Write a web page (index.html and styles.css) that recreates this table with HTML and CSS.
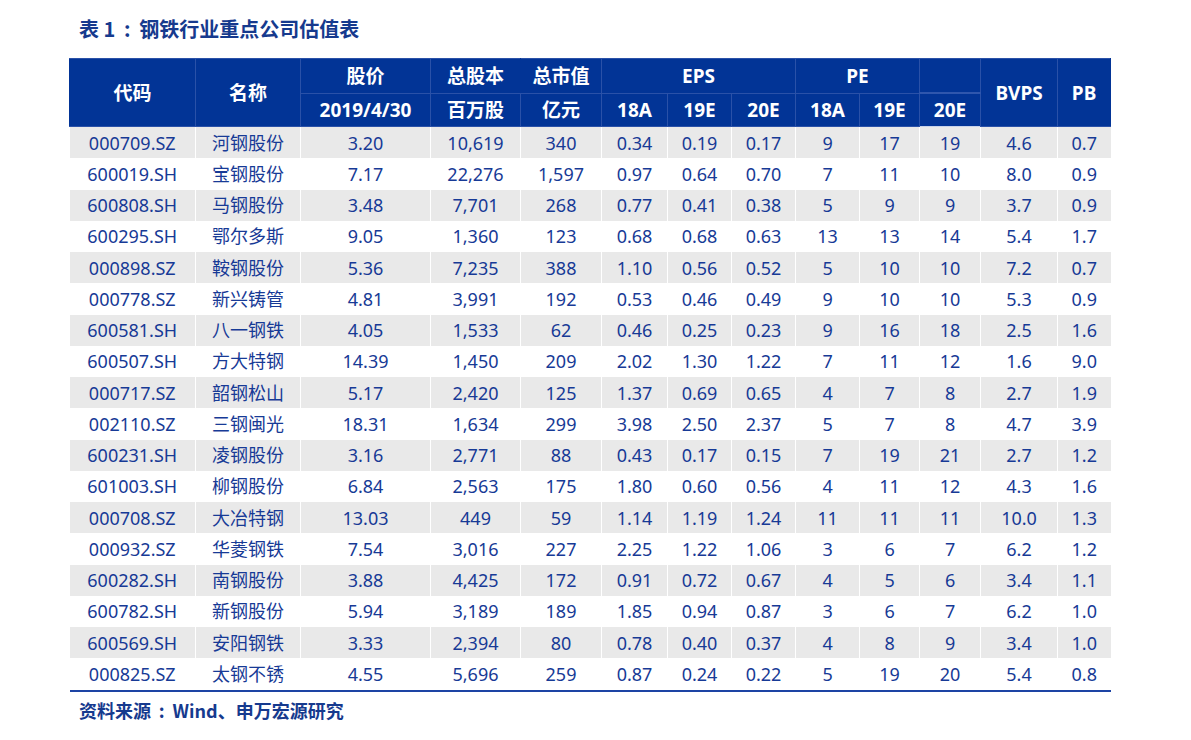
FILE: index.html
```html
<!DOCTYPE html>
<html lang="zh-CN">
<head>
<meta charset="utf-8">
<title>钢铁行业重点公司估值表</title>
<link rel="stylesheet" href="styles.css">
</head>
<body>
<div class="page">
  <h1 class="title">表 1<span class="punct">:</span>钢铁行业重点公司估值表</h1>
  <table class="val">
    <colgroup>
      <col class="c-code"><col class="c-name"><col class="c-price"><col class="c-shares"><col class="c-cap">
      <col class="c-e1"><col class="c-e2"><col class="c-e3"><col class="c-p1"><col class="c-p2"><col class="c-p3">
      <col class="c-bvps"><col class="c-pb">
    </colgroup>
    <thead>
      <tr class="h1">
        <th rowspan="2">代码</th>
        <th rowspan="2">名称</th>
        <th>股价</th>
        <th class="nosep">总股本</th>
        <th>总市值</th>
        <th colspan="3">EPS</th>
        <th colspan="2">PE</th>
        <th class="blank"></th>
        <th rowspan="2">BVPS</th>
        <th rowspan="2">PB</th>
      </tr>
      <tr class="h2">
        <th>2019/4/30</th>
        <th>百万股</th>
        <th>亿元</th>
        <th>18A</th>
        <th>19E</th>
        <th>20E</th>
        <th>18A</th>
        <th>19E</th>
        <th class="odd">20E</th>
      </tr>
    </thead>
    <tbody>
      <tr><td>000709.SZ</td><td>河钢股份</td><td>3.20</td><td>10,619</td><td>340</td><td>0.34</td><td>0.19</td><td>0.17</td><td>9</td><td>17</td><td>19</td><td>4.6</td><td>0.7</td></tr>
      <tr><td>600019.SH</td><td>宝钢股份</td><td>7.17</td><td>22,276</td><td>1,597</td><td>0.97</td><td>0.64</td><td>0.70</td><td>7</td><td>11</td><td>10</td><td>8.0</td><td>0.9</td></tr>
      <tr><td>600808.SH</td><td>马钢股份</td><td>3.48</td><td>7,701</td><td>268</td><td>0.77</td><td>0.41</td><td>0.38</td><td>5</td><td>9</td><td>9</td><td>3.7</td><td>0.9</td></tr>
      <tr><td>600295.SH</td><td>鄂尔多斯</td><td>9.05</td><td>1,360</td><td>123</td><td>0.68</td><td>0.68</td><td>0.63</td><td>13</td><td>13</td><td>14</td><td>5.4</td><td>1.7</td></tr>
      <tr><td>000898.SZ</td><td>鞍钢股份</td><td>5.36</td><td>7,235</td><td>388</td><td>1.10</td><td>0.56</td><td>0.52</td><td>5</td><td>10</td><td>10</td><td>7.2</td><td>0.7</td></tr>
      <tr><td>000778.SZ</td><td>新兴铸管</td><td>4.81</td><td>3,991</td><td>192</td><td>0.53</td><td>0.46</td><td>0.49</td><td>9</td><td>10</td><td>10</td><td>5.3</td><td>0.9</td></tr>
      <tr><td>600581.SH</td><td>八一钢铁</td><td>4.05</td><td>1,533</td><td>62</td><td>0.46</td><td>0.25</td><td>0.23</td><td>9</td><td>16</td><td>18</td><td>2.5</td><td>1.6</td></tr>
      <tr><td>600507.SH</td><td>方大特钢</td><td>14.39</td><td>1,450</td><td>209</td><td>2.02</td><td>1.30</td><td>1.22</td><td>7</td><td>11</td><td>12</td><td>1.6</td><td>9.0</td></tr>
      <tr><td>000717.SZ</td><td>韶钢松山</td><td>5.17</td><td>2,420</td><td>125</td><td>1.37</td><td>0.69</td><td>0.65</td><td>4</td><td>7</td><td>8</td><td>2.7</td><td>1.9</td></tr>
      <tr><td>002110.SZ</td><td>三钢闽光</td><td>18.31</td><td>1,634</td><td>299</td><td>3.98</td><td>2.50</td><td>2.37</td><td>5</td><td>7</td><td>8</td><td>4.7</td><td>3.9</td></tr>
      <tr><td>600231.SH</td><td>凌钢股份</td><td>3.16</td><td>2,771</td><td>88</td><td>0.43</td><td>0.17</td><td>0.15</td><td>7</td><td>19</td><td>21</td><td>2.7</td><td>1.2</td></tr>
      <tr><td>601003.SH</td><td>柳钢股份</td><td>6.84</td><td>2,563</td><td>175</td><td>1.80</td><td>0.60</td><td>0.56</td><td>4</td><td>11</td><td>12</td><td>4.3</td><td>1.6</td></tr>
      <tr><td>000708.SZ</td><td>大冶特钢</td><td>13.03</td><td>449</td><td>59</td><td>1.14</td><td>1.19</td><td>1.24</td><td>11</td><td>11</td><td>11</td><td>10.0</td><td>1.3</td></tr>
      <tr><td>000932.SZ</td><td>华菱钢铁</td><td>7.54</td><td>3,016</td><td>227</td><td>2.25</td><td>1.22</td><td>1.06</td><td>3</td><td>6</td><td>7</td><td>6.2</td><td>1.2</td></tr>
      <tr><td>600282.SH</td><td>南钢股份</td><td>3.88</td><td>4,425</td><td>172</td><td>0.91</td><td>0.72</td><td>0.67</td><td>4</td><td>5</td><td>6</td><td>3.4</td><td>1.1</td></tr>
      <tr><td>600782.SH</td><td>新钢股份</td><td>5.94</td><td>3,189</td><td>189</td><td>1.85</td><td>0.94</td><td>0.87</td><td>3</td><td>6</td><td>7</td><td>6.2</td><td>1.0</td></tr>
      <tr><td>600569.SH</td><td>安阳钢铁</td><td>3.33</td><td>2,394</td><td>80</td><td>0.78</td><td>0.40</td><td>0.37</td><td>4</td><td>8</td><td>9</td><td>3.4</td><td>1.0</td></tr>
      <tr><td>000825.SZ</td><td>太钢不锈</td><td>4.55</td><td>5,696</td><td>259</td><td>0.87</td><td>0.24</td><td>0.22</td><td>5</td><td>19</td><td>20</td><td>5.4</td><td>0.8</td></tr>
    </tbody>
  </table>
  <p class="source">资料来源<span class="punct">:</span>Wind、申万宏源研究</p>
</div>
</body>
</html>
```
FILE: styles.css
```css
html, body {
  margin: 0;
  padding: 0;
  background: #ffffff;
}

.page {
  width: 1191px;
  height: 740px;
  box-sizing: border-box;
  padding: 0 0 0 69px;
  font-family: "Noto Sans", "Noto Sans CJK SC", sans-serif;
}

.title {
  margin: 0;
  padding: 17px 0 0 10px;
  height: 58px;
  box-sizing: border-box;
  font-family: "Noto Sans CJK SC", sans-serif;
  font-size: 20px;
  line-height: 24px;
  font-weight: 700;
  color: #163a8e;
}

.punct {
  display: inline-block;
  width: 1.2em;
  text-align: center;
}

.val {
  width: 1041px;
  border-collapse: collapse;
  table-layout: fixed;
  border-top: 1px solid #5c79b4;
  border-bottom: 2px solid #1d44a4;
}

.c-code { width: 126px; }
.c-name { width: 105px; }
.c-price { width: 130px; }
.c-shares { width: 90px; }
.c-cap { width: 81px; }
.c-e1 { width: 66px; }
.c-e2 { width: 64px; }
.c-e3 { width: 64px; }
.c-p1 { width: 64px; }
.c-p2 { width: 60px; }
.c-p3 { width: 61px; }
.c-bvps { width: 77px; }
.c-pb { width: 53px; }

.val th {
  background: #023496;
  color: #ffffff;
  font-family: "Noto Sans", "Noto Sans CJK SC", sans-serif;
  font-weight: 700;
  font-size: 19px;
  padding: 0;
  text-align: center;
  border: 1px solid #2a51a8;
  line-height: 22px;
}

.val th:first-child { border-left-color: #023496; }
.val tr.h1 th:last-child { border-right-color: #023496; }

.val tr.h1 th { height: 33px; }
.val tr.h2 th { height: 32px; }

.val th.nosep { border-right-color: #023496; }
.val th.blank { border-bottom: 2px solid #2f56ad; }
.val th.odd { border-bottom: 1px solid #c9d3ea; }

.val td {
  height: 31.25px;
  padding: 0;
  text-align: center;
  font-size: 18px;
  line-height: 22px;
  color: #173a96;
  border-left: 1px solid #ffffff;
  font-family: "Noto Sans", "Noto Sans CJK SC", sans-serif;
}

.val td:first-child { border-left: none; }

.val tbody tr:nth-child(odd) td { background: #e9e9e9; }
.val tbody tr:nth-child(even) td { background: #ffffff; }

.source {
  margin: 0;
  padding: 7px 0 0 10px;
  font-family: "Noto Sans CJK SC", sans-serif;
  font-size: 18px;
  line-height: 22px;
  font-weight: 700;
  color: #163a8e;
}
```
